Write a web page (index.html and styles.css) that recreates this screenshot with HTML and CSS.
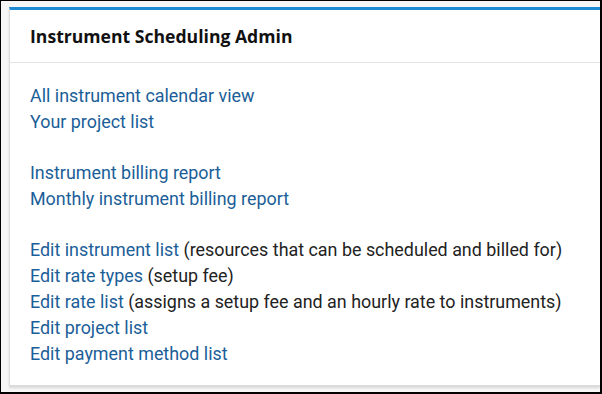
FILE: index.html
```html
<!DOCTYPE html>
<html lang="en">
<head>
  <meta charset="UTF-8" />
  <title>Instrument Scheduling Admin</title>
  <link rel="stylesheet" href="styles.css">
</head>
<body>
  <div class="frame">
    <div class="panel">
      <div class="panel-header">
        <h2>Instrument Scheduling Admin</h2>
      </div>
      <div class="panel-body">
        <ul class="links">
          <li><a href="#">All instrument calendar view</a></li>
          <li><a href="#">Your project list</a></li>
        </ul>
        <ul class="links">
          <li><a href="#">Instrument billing report</a></li>
          <li><a href="#">Monthly instrument billing report</a></li>
        </ul>
        <ul class="links">
          <li><a href="#">Edit instrument list</a> (resources that can be scheduled and billed for)</li>
          <li><a href="#">Edit rate types</a> (setup fee)</li>
          <li><a href="#">Edit rate list</a> (assigns a setup fee and an hourly rate to instruments)</li>
          <li><a href="#">Edit project list</a></li>
          <li><a href="#">Edit payment method list</a></li>
        </ul>
      </div>
    </div>
  </div>
</body>
</html>
```

FILE: styles.css
```css
html, body {
  margin: 0;
  padding: 0;
}
body {
  font-family: Roboto, 'Liberation Sans', sans-serif;
  color: #222;
}
.frame {
  box-sizing: border-box;
  width: 602px;
  height: 394px;
  border: 1px solid #000;
  border-right-width: 2px;
  border-bottom-width: 2px;
  background-color: #f6f6f6;
  padding: 6px 0 0 8px;
  overflow: hidden;
}
.panel {
  background-color: #fff;
  border: 1px solid #dcdcdc;
  border-top: 3px solid #1f8ad2;
  border-right: none;
  box-shadow: 0 2px 2px rgba(0, 0, 0, 0.12);
  height: 379px;
  box-sizing: border-box;
}
.panel-header {
  border-bottom: 1px solid #e2e2e2;
  padding: 0 20px;
  height: 52px;
  display: flex;
  align-items: center;
}
.panel-header h2 {
  margin: 0;
  font-family: 'Open Sans', sans-serif;
  font-size: 17.6px;
  font-weight: 700;
  color: #111;
}
.panel-body {
  padding: 20px 20px;
}
.links {
  list-style: none;
  margin: 0 0 25px;
  padding: 0;
  font-size: 17.9px;
  line-height: 26px;
}
.links a {
  color: #1b5e98;
  text-decoration: none;
}
```
